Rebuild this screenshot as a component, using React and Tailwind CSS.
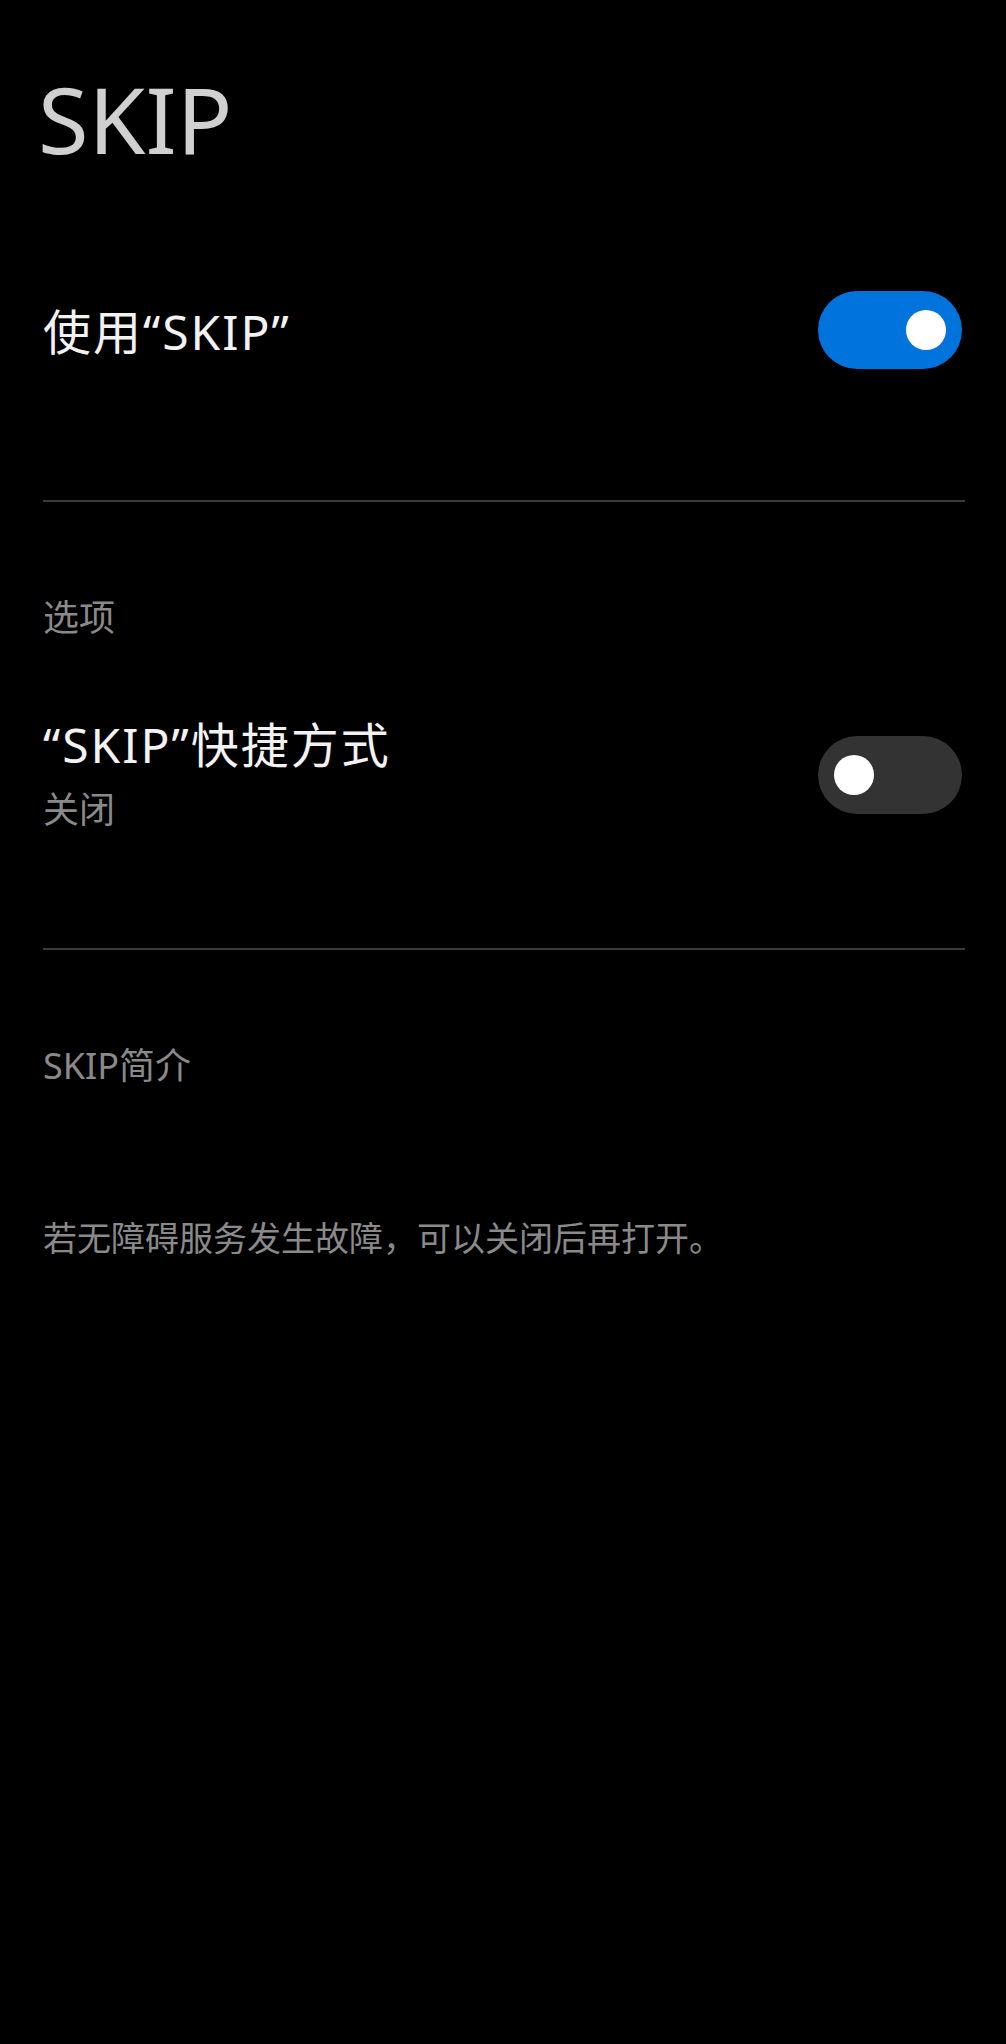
import React, { useState } from 'react';

function Toggle({ on, onChange }) {
  return (
    <button
      onClick={() => onChange(!on)}
      className={
        'flex h-[78px] w-[144px] shrink-0 items-center rounded-full px-[16px] ' +
        (on ? 'justify-end bg-[#0073dd]' : 'justify-start bg-[#333333]')
      }
    >
      <span className="block h-[40px] w-[40px] rounded-full bg-white" />
    </button>
  );
}

export default function App() {
  const [enabled, setEnabled] = useState(true);
  const [shortcut, setShortcut] = useState(false);

  return (
    <div className="min-h-screen bg-black pl-[43px] pr-[41px] font-['Noto_Sans','Noto_Sans_CJK_SC',sans-serif]">
      {/* Title */}
      <h1 className="-ml-[5px] pt-[73px] text-[92px] font-normal leading-none text-[#d0d0d0]">SKIP</h1>

      {/* Main switch */}
      <div className="mt-[126px] flex h-[78px] items-center justify-between">
        <span className="pt-[4px] text-[48px] leading-none tracking-[2px] text-[#f2f2f2]">使用“SKIP”</span>
        <div className="mr-[3px]">
          <Toggle on={enabled} onChange={setEnabled} />
        </div>
      </div>

      <div className="mt-[131px] h-[2px] bg-[#3a3a3a]" />

      {/* Options */}
      <p className="mt-[98px] text-[36px] leading-none text-[#8a8a8a]">选项</p>

      <div className="mt-[85px] flex items-center justify-between">
        <div className="flex flex-col gap-[23px]">
          <span className="text-[48px] leading-none tracking-[2px] text-[#f2f2f2]">“SKIP”快捷方式</span>
          <span className="text-[36px] leading-none text-[#8a8a8a]">{shortcut ? '开启' : '关闭'}</span>
        </div>
        <div className="mr-[3px]">
          <Toggle on={shortcut} onChange={setShortcut} />
        </div>
      </div>

      <div className="mt-[120px] h-[2px] bg-[#3a3a3a]" />

      {/* About */}
      <p className="mt-[98px] text-[36px] leading-none text-[#8a8a8a]">SKIP简介</p>

      <p className="mt-[137px] text-[34px] leading-none text-[#8a8a8a]">
        若无障碍服务发生故障，可以关闭后再打开。
      </p>
    </div>
  );
}
